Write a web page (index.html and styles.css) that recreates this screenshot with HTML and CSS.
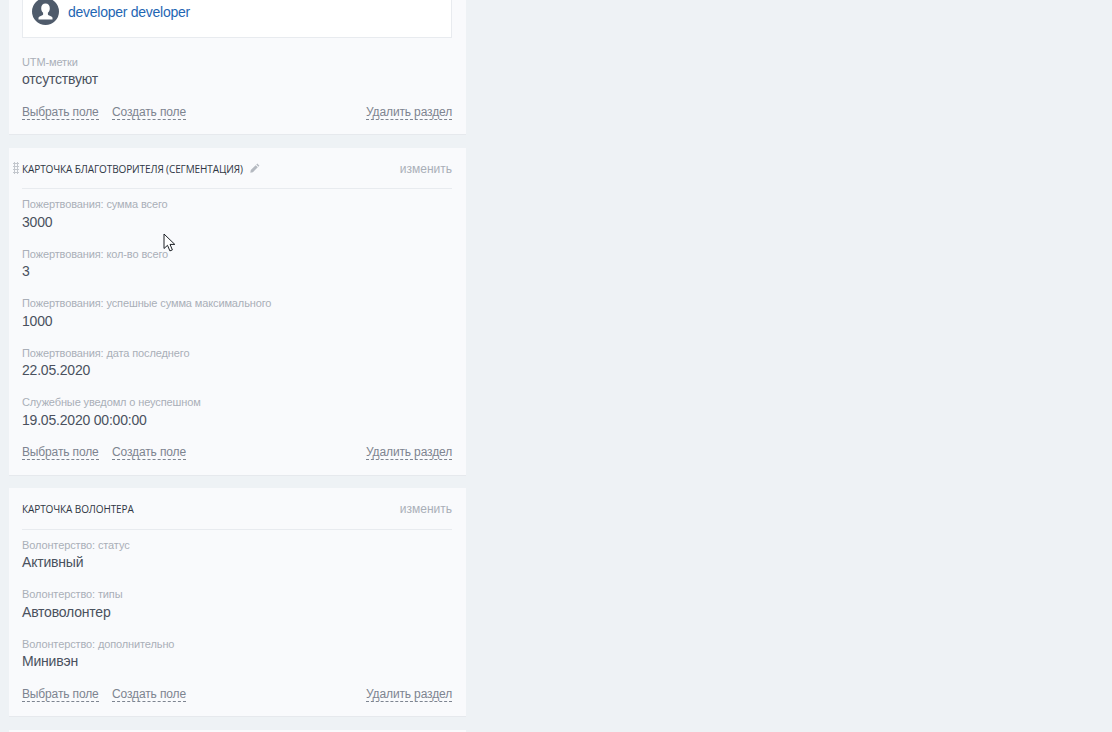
FILE: index.html
```html
<!DOCTYPE html>
<html lang="ru">
<head>
<meta charset="utf-8">
<title>Карточка</title>
<link rel="stylesheet" href="styles.css">
</head>
<body>
<main class="column">
  <section class="card card-first">
    <div class="person-box">
      <span class="avatar">
        <svg viewBox="0 0 27 27" width="27" height="27"><circle cx="13.5" cy="13.5" r="13.5" fill="#4f5b6b"/><path d="M13.5 5.5c-2.7 0-4.3 2-4.3 4.7 0 1.9.8 3.6 1.9 4.6v1.5c0 .7-.5 1-1.3 1.3-1.5.5-3 1.1-3.3 2.2v1.7h14v-1.7c-.3-1.1-1.8-1.7-3.3-2.2-.8-.3-1.3-.6-1.3-1.3v-1.5c1.1-1 1.9-2.7 1.9-4.6 0-2.7-1.6-4.7-4.3-4.7z" fill="#fff"/></svg>
      </span>
      <a class="person-link">developer developer</a>
    </div>
    <div class="field field-utm">
      <div class="label">UTM-метки</div>
      <div class="value">отсутствуют</div>
    </div>
    <div class="actions">
      <a class="action">Выбрать поле</a>
      <a class="action">Создать поле</a>
      <a class="action action-end">Удалить раздел</a>
    </div>
  </section>

  <section class="card card-second">
    <span class="grip"></span>
    <header class="card-head card-head-shifted">
      <h2 class="title">Карточка благотворителя (сегментация)</h2>
      <svg class="pencil" viewBox="0 0 10 10" width="10" height="10"><path d="M7.3.6l2.1 2.1-1 1-2.1-2.1zM5.7 2.2l2.1 2.1-4.9 4.9-2.6.5.5-2.6z" fill="#b4b9c0"/></svg>
      <a class="edit">изменить</a>
    </header>
    <div class="fields">
      <div class="field"><div class="label">Пожертвования: сумма всего</div><div class="value">3000</div></div>
      <div class="field"><div class="label">Пожертвования: кол-во всего</div><div class="value">3</div></div>
      <div class="field"><div class="label">Пожертвования: успешные сумма максимального</div><div class="value">1000</div></div>
      <div class="field"><div class="label">Пожертвования: дата последнего</div><div class="value">22.05.2020</div></div>
      <div class="field"><div class="label">Служебные уведомл о неуспешном</div><div class="value">19.05.2020 00:00:00</div></div>
    </div>
    <div class="actions">
      <a class="action">Выбрать поле</a>
      <a class="action">Создать поле</a>
      <a class="action action-end">Удалить раздел</a>
    </div>
  </section>

  <section class="card card-third">
    <header class="card-head card-head-tall">
      <h2 class="title">Карточка волонтера</h2>
      <a class="edit">изменить</a>
    </header>
    <div class="fields">
      <div class="field"><div class="label">Волонтерство: статус</div><div class="value">Активный</div></div>
      <div class="field"><div class="label">Волонтерство: типы</div><div class="value">Автоволонтер</div></div>
      <div class="field"><div class="label">Волонтерство: дополнительно</div><div class="value">Минивэн</div></div>
    </div>
    <div class="actions">
      <a class="action">Выбрать поле</a>
      <a class="action">Создать поле</a>
      <a class="action action-end">Удалить раздел</a>
    </div>
  </section>

  <section class="card card-next"></section>
</main>
<svg class="cursor" viewBox="0 0 14 20" width="14" height="20"><path d="M1 1v14.5l3.5-3.2 2.4 5.6 2.5-1-2.4-5.5h4.8z" fill="#fff" stroke="#1c2026" stroke-width="1"/></svg>
</body>
</html>
```
FILE: styles.css
```css
* { box-sizing: border-box; }
html, body { margin: 0; height: 100%; }
body {
  background: #eef2f5;
  overflow: hidden;
  font-family: "Liberation Sans", Arial, sans-serif;
  color: #4a515e;
}
.column {
  width: 457px;
  margin-left: 9px;
  display: flex;
  flex-direction: column;
  gap: 13px;
}
.card {
  background: #f9fafc;
  border-bottom: 1px solid #e6e9ed;
  padding: 0 14px 0 13px;
  position: relative;
}
.card-first { height: 135px; }
.card-second { height: 328px; }
.card-third { height: 229px; margin-top: -1px; }
.card-next { height: 40px; }
.person-box {
  height: 38px;
  background: #fff;
  border: 1px solid #e8ebef;
  border-top: 0;
  display: flex;
  align-items: center;
  gap: 9px;
  padding: 0 0 14px 9px;
}
.avatar { display: block; height: 27px; }
.avatar svg { display: block; }
.person-link { font-size: 14px; letter-spacing: -0.26px; color: #1f66b3; }
.field { height: 49.5px; }
.field-utm { margin-top: 16px; height: 52px; }
.field-utm .value { margin-top: 1px; }
.label { font-size: 11px; line-height: 13px; letter-spacing: -0.12px; color: #a9afb8; padding-top: 2px; }
.value { font-size: 14px; line-height: 18px; letter-spacing: -0.2px; margin-top: 1.75px; color: #4a515e; }
.actions {
  display: flex;
  gap: 13.5px;
  font-size: 12px;
  line-height: 13px;
  letter-spacing: -0.14px;
}
.action { color: #7d8490; border-bottom: 1px dashed #7d8490; }
.action-end { margin-left: auto; }
.card-head {
  height: 41px;
  display: flex;
  align-items: center;
  border-bottom: 1px solid #e8ebef;
  margin-bottom: 7px;
}
.card-head-shifted { padding-top: 1px; }
.card-head-tall { height: 42px; margin-bottom: 6.5px; }
.title {
  margin: 0;
  font: 400 10px/14px "Open Sans", sans-serif;
  letter-spacing: -0.1px;
  text-transform: uppercase;
  color: #2f3744;
}
.pencil { margin-left: 7px; margin-top: -2px; }
.edit { margin-left: auto; font-size: 12px; color: #a9afb8; }
.grip {
  position: absolute;
  left: 4px;
  top: 14px;
  width: 6px;
  height: 12px;
  background-image: radial-gradient(circle, #c3c7cd 1px, transparent 1.2px);
  background-size: 3px 3px;
}
.fields { display: flex; flex-direction: column; }
.card-second .actions { margin-top: 2px; }
.card-third .actions { margin-top: 2.5px; }
.cursor { position: absolute; left: 163px; top: 233px; }
```
